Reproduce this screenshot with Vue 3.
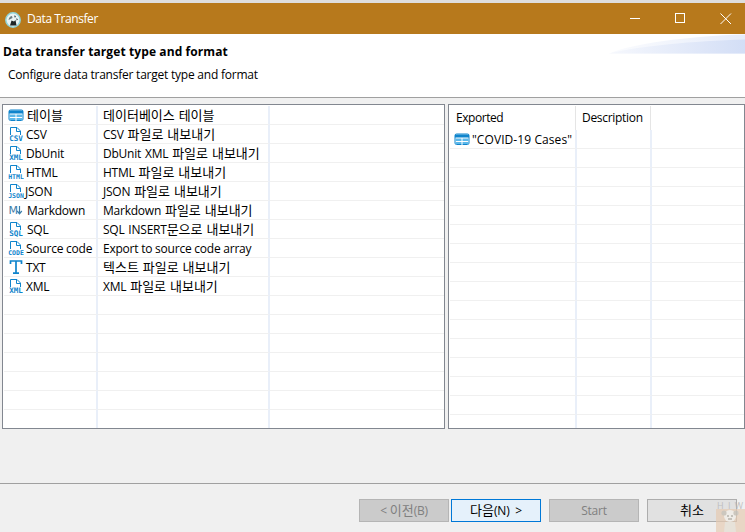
<script setup>
const rows = [
  { icon: 'table', name: '테이블', desc: '데이터베이스 테이블', gap: 3 },
  { icon: 'doc', label: 'CSV', name: 'CSV', desc: 'CSV 파일로 내보내기', gap: 2 },
  { icon: 'doc', label: 'XML', name: 'DbUnit', desc: 'DbUnit XML 파일로 내보내기', gap: 2 },
  { icon: 'doc', label: 'HTML', name: 'HTML', desc: 'HTML 파일로 내보내기', gap: 2 },
  { icon: 'doc', label: 'JSON', name: 'JSON', desc: 'JSON 파일로 내보내기', gap: 1 },
  { icon: 'md', name: 'Markdown', desc: 'Markdown 파일로 내보내기', gap: 3 },
  { icon: 'doc', label: 'SQL', name: 'SQL', desc: 'SQL INSERT문으로 내보내기', gap: 3 },
  { icon: 'doc', label: 'CODE', name: 'Source code', desc: 'Export to source code array', gap: 2 },
  { icon: 'txt', name: 'TXT', desc: '텍스트 파일로 내보내기', gap: 2 },
  { icon: 'doc', label: 'XML', name: 'XML', desc: 'XML 파일로 내보내기', gap: 2 },
  ...Array.from({ length: 7 }, () => ({ icon: '', name: '', desc: '', gap: 0 }))
]
const exported = Array.from({ length: 16 }, (_, i) => (i === 0 ? '"COVID-19 Cases"' : ''))

// Hangul runs are set a size larger, as the original UI font has wider Hangul
function segs(text) {
  return (text.match(/[가-힣]+|[^가-힣]+/g) || []).map((t) => ({ t, ko: /[가-힣]/.test(t) }))
}
const hasKo = (text) => /[가-힣]/.test(text)
</script>

<template>
  <div class="window">
    <div class="strip"></div>
    <header class="titlebar">
      <svg class="app-icon" width="16" height="16" viewBox="0 0 16 16">
        <circle cx="8" cy="8" r="7.2" fill="#e9f3f3" stroke="#8fd4da" stroke-width="1.5" />
        <path d="M5 13.5l1.5-5 2.5 1 1.5-1.5 1 5.5z" fill="#1d2527" />
        <path d="M3.5 8C4 5.5 5.5 4 7 4L7.5 6 5.5 7z" fill="#6b7c80" />
        <path d="M9 3.5l2 .5-1 2zM11.5 6l1.5 1.5-1.5 1z" fill="#36474b" />
      </svg>
      <span class="title">Data Transfer</span>
      <div class="controls">
        <svg width="12" height="12" viewBox="0 0 12 12" class="ctl-min"><path d="M1 5.5h10" stroke="#fff" /></svg>
        <svg width="12" height="12" viewBox="0 0 12 12" class="ctl-max"><rect x="1.5" y=".5" width="9" height="9" fill="none" stroke="#fff" /></svg>
        <svg width="12" height="12" viewBox="0 0 12 12" class="ctl-close"><path d="M.5 .5l10.5 10.5M11 .5L.5 11" stroke="#fff" /></svg>
      </div>
    </header>

    <section class="banner">
      <svg class="swoosh" width="136" height="20" viewBox="0 0 136 20">
        <defs>
          <linearGradient id="sw" x1="0" x2="1" y1="0" y2="0">
            <stop offset="0" stop-color="#f6f8fd" />
            <stop offset="1" stop-color="#d3def6" />
          </linearGradient>
          <linearGradient id="sw2" x1="0" x2="1" y1="0" y2="0">
            <stop offset="0" stop-color="#fbfcfe" />
            <stop offset="1" stop-color="#e6ecfa" />
          </linearGradient>
        </defs>
        <path d="M0 19.5C22 10 78 2 136 .5V19.5Z" fill="url(#sw2)" />
        <path d="M0 19.5C30 12 84 7 136 5.5V19.5Z" fill="url(#sw)" />
      </svg>
      <h1>Data transfer target type and format</h1>
      <p>Configure data transfer target type and format</p>
    </section>

    <main class="panes">
      <div class="pane left">
        <div v-for="(r, i) in rows" :key="i" class="row">
          <div class="cell c1">
            <svg v-if="r.icon === 'table'" class="ic" width="16" height="16" viewBox="0 0 16 16">
              <rect x="1" y="3" width="14" height="10.5" rx="1.5" fill="#fff" stroke="#0f84cc" />
              <path d="M1 3.5h14v3H1z" fill="#0f84cc" />
              <path d="M1.5 7.5h13v2.5h-13zM1.5 11h13v2h-13z" fill="#5cb8ea" />
              <path d="M8 7v7" stroke="#fff" />
            </svg>
            <svg v-else-if="r.icon === 'doc'" class="ic" width="16" height="16" viewBox="0 0 16 16">
              <path d="M2.5 9V1.5h6.5l3.5 3.5V9" fill="none" stroke="#0f84cc" />
              <path d="M8.5 1.5v4h4" fill="none" stroke="#0f84cc" />
              <text x="8" y="15" text-anchor="middle" class="ic-label" :class="{ wide: r.label.length > 3 }">{{ r.label }}</text>
            </svg>
            <svg v-else-if="r.icon === 'md'" class="ic" width="16" height="16" viewBox="0 0 16 16">
              <text x="0.5" y="12" class="ic-m">M</text>
              <path d="M11.5 4v7.5M9.2 9l2.3 2.8L13.8 9" fill="none" stroke="#3a7ca8" stroke-width="1.2" />
            </svg>
            <svg v-else-if="r.icon === 'txt'" class="ic" width="16" height="16" viewBox="0 0 16 16">
              <path d="M2.5 5V2h11v3M8 2v12M5 14.2h6" fill="none" stroke="#0f84cc" stroke-width="1.7" />
            </svg>
            <span v-if="r.name" class="line" :style="{ marginLeft: r.gap + 'px' }"><span v-for="(s, j) in segs(r.name)" :key="j" :class="{ ko: s.ko }">{{ s.t }}</span></span>
          </div>
          <div class="cell c2"><span v-if="r.desc" class="line" :class="{ mixed: hasKo(r.desc) }"><span v-for="(s, j) in segs(r.desc)" :key="j" :class="{ ko: s.ko }">{{ s.t }}</span></span></div>
          <div class="cell c3"></div>
        </div>
      </div>

      <div class="pane right">
        <div class="thead">
          <div class="th t1">Exported</div>
          <div class="th t2">Description</div>
          <div class="th t3"></div>
        </div>
        <div v-for="(e, i) in exported" :key="i" class="row">
          <div class="cell e1">
            <svg v-if="e" class="ic" width="16" height="16" viewBox="0 0 16 16">
              <rect x="1" y="3" width="14" height="10.5" rx="1.5" fill="#fff" stroke="#0f84cc" />
              <path d="M1 3.5h14v3H1z" fill="#0f84cc" />
              <path d="M1.5 7.5h13v2.5h-13zM1.5 11h13v2h-13z" fill="#5cb8ea" />
              <path d="M8 7v7" stroke="#fff" />
            </svg>
            <span v-if="e" class="line e-txt">{{ e }}</span>
          </div>
          <div class="cell e2"></div>
          <div class="cell e3"></div>
        </div>
      </div>
    </main>

    <footer class="footer">
      <button class="btn off back">&lt; <span class="ko">이전</span>(B)</button>
      <button class="btn primary"><span class="ko">다음</span>(N) &nbsp;&gt;</button>
      <button class="btn off start">Start</button>
      <button class="btn cancel"><span class="ko">취소</span></button>
    </footer>

    <div class="mark">
      <span class="mark-text">H I W</span>
      <svg class="mark-art" width="29" height="23" viewBox="0 0 29 23">
        <rect width="29" height="23" fill="#e6cbb2" opacity=".8" />
        <circle cx="14" cy="7" r="6" fill="#f2efe9" />
        <circle cx="8" cy="4" r="2.6" fill="#c9c3b9" />
        <circle cx="20" cy="4" r="2.6" fill="#c9c3b9" />
        <path d="M9 13h10l1 10H8z" fill="#e6e0d6" />
        <path d="M11 7h2M15 7h2M12 10h4" stroke="#8f8a80" />
      </svg>
    </div>
  </div>
</template>

<style>
html, body { margin: 0; background: #f0f0f0; }
</style>

<style scoped>
.window {
  position: relative;
  width: 745px;
  height: 532px;
  overflow: hidden;
  display: flex;
  flex-direction: column;
  background: #f0f0f0;
  color: #000;
  font: 12px/16px "Open Sans", "Noto Sans CJK KR", sans-serif;
  letter-spacing: -0.23px;
}
.ko {
  font-family: "Noto Sans CJK KR", sans-serif;
  font-size: 13px;
  letter-spacing: 0;
}
/* same strut on every cell text, so Latin-only and Hangul rows share a baseline */
.line::before {
  content: "\200b";
  font-family: "Noto Sans CJK KR", sans-serif;
  font-size: 13px;
}
.mixed { word-spacing: 1px; }
.strip { height: 3px; background: #dedede; }
.titlebar {
  height: 31px;
  background: #b7791c;
  display: flex;
  align-items: center;
  padding-left: 5px;
  color: #fff;
  box-sizing: border-box;
}
.app-icon { margin-top: 2px; }
.title { margin-left: 6px; letter-spacing: -0.42px; }
.controls { margin-left: auto; display: flex; align-items: center; }
.ctl-min { margin-right: 33px; }
.ctl-max { margin-right: 34px; }
.ctl-close { margin-right: 13px; }

.banner {
  position: relative;
  height: 63px;
  background: #fff;
  border-bottom: 1px solid #a0a0a0;
}
.swoosh { position: absolute; right: 0; top: 0; }
.banner h1 {
  margin: 0;
  padding: 10px 0 0 3px;
  font-size: 12px;
  line-height: 16px;
  font-weight: 700;
  letter-spacing: 0.1px;
}
.banner p {
  margin: 7px 0 0 8px;
}

.panes {
  display: flex;
  gap: 3px;
  margin: 6px 0 0 2px;
  height: 325px;
}
.pane {
  box-sizing: border-box;
  height: 325px;
  border: 1px solid #828790;
  background: #fff;
  padding: 1px 0 1px 1px;
  overflow: hidden;
}
.left { width: 443px; }
.right { width: 297px; }

.row { display: flex; height: 19px; }
.cell {
  box-sizing: border-box;
  height: 19px;
  border-bottom: 1px solid #f0f0f0;
  display: flex;
  align-items: center;
  white-space: nowrap;
}
.c1 { width: 94px; padding-left: 4px; border-right: 2px solid #e9eff9; }
.c2 { width: 172px; padding-left: 5px; border-right: 2px solid #e9eff9; }
.c3 { flex: 1; }
.ic { flex: none; }
.ic-label {
  font: 700 7.6px "DejaVu Sans Mono", monospace;
  letter-spacing: 0;
  fill: #0f84cc;
}
.ic-label.wide { font-size: 6.5px; }
.ic-m {
  font: 400 11px "DejaVu Sans", sans-serif;
  letter-spacing: 0;
  fill: #3a7ca8;
}

.thead { display: flex; height: 24px; }
.th {
  box-sizing: border-box;
  height: 24px;
  display: flex;
  align-items: center;
  padding-bottom: 1px;
  border-right: 1px solid #e5e5e5;
}
.t1 { width: 126px; padding-left: 6px; letter-spacing: -0.45px; }
.t2 { width: 75px; padding-left: 6px; letter-spacing: -0.3px; }
.t3 { flex: 1; border-right: 0; }
.e1 { width: 127px; padding-left: 4px; border-right: 2px solid #e9eff9; }
.e2 { width: 75px; border-right: 2px solid #e9eff9; }
.e3 { flex: 1; }
.e-txt { margin-left: 2px; letter-spacing: 0.08px; }

.footer {
  margin-top: 54px;
  border-top: 1px solid #a0a0a0;
  padding: 15px 8px 0 0;
  display: flex;
  justify-content: flex-end;
}
.btn {
  width: 90px;
  height: 23px;
  box-sizing: border-box;
  padding: 0;
  font: inherit;
  letter-spacing: inherit;
  border: 1px solid #adadad;
  background: #e1e1e1;
  color: #000;
}
.off { background: #cbcbcb; border-color: #b5b5b5; color: #808080; }
.back { margin-right: 2px; }
.primary { background: #e5f1fb; border-color: #0078d7; margin-right: 8px; }
.start { margin-right: 8px; }

.mark {
  position: absolute;
  right: 0;
  bottom: 0;
  width: 29px;
  height: 30px;
  pointer-events: none;
  display: flex;
  flex-direction: column;
  align-items: center;
  opacity: .85;
}
.mark-text {
  font: 9px/7px "Open Sans", sans-serif;
  letter-spacing: 1px;
  color: #b9b9b9;
  white-space: nowrap;
}
.mark-art { display: block; }
</style>
